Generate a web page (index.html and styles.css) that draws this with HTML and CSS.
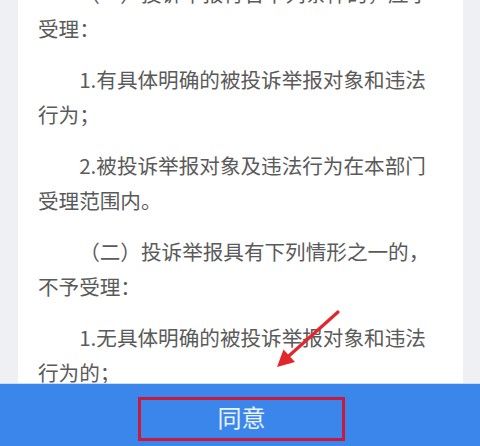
FILE: index.html
```html
<!DOCTYPE html>
<html lang="zh-CN">
<head>
<meta charset="utf-8">
<title>投诉举报须知</title>
<link rel="stylesheet" href="styles.css">
</head>
<body>
<div class="page">
  <main class="viewport">
    <article class="card">
      <p class="para indent">（一）投诉举报符合下列条件的，应予受理：</p>
      <p class="para indent">1.有具体明确的被投诉举报对象和违法行为；</p>
      <p class="para indent">2.被投诉举报对象及违法行为在本部门受理范围内。</p>
      <p class="para indent">（二）投诉举报具有下列情形之一的，不予受理：</p>
      <p class="para indent">1.无具体明确的被投诉举报对象和违法行为的；</p>
      <p class="para indent">2.被投诉举报对象及违法行为不在本部门受理范围内的；</p>
    </article>
  </main>
  <footer class="footer">
    <button class="agree">同意</button>
  </footer>
  <svg class="arrow" width="480" height="446" viewBox="0 0 480 446" aria-hidden="true">
    <line x1="338" y1="312" x2="286" y2="358.5" stroke="#e3262a" stroke-width="3.2" stroke-linecap="round"/>
    <polygon points="277,367 283.5,349.5 295,362" fill="#e3262a"/>
  </svg>
</div>
</body>
</html>
```
FILE: styles.css
```css
html, body {
  margin: 0;
  padding: 0;
}
body {
  width: 480px;
  height: 446px;
  overflow: hidden;
  background: #eef0f3;
  font-family: "Noto Sans CJK SC", "Noto Sans", sans-serif;
}
.page {
  display: flex;
  flex-direction: column;
  height: 446px;
}
.viewport {
  height: 383px;
  overflow: hidden;
  flex: none;
}
.card {
  margin: -24px 17px 0 18px;
  padding: 0 20px 40px 20px;
  background: #ffffff;
  color: #5a5a5a;
  font-size: 20.6px;
  line-height: 35px;
}
.para {
  margin: 0 0 16px 0;
}
.indent {
  text-indent: 2em;
}
.footer {
  flex: 1;
  background: #3b86ea;
  border-top: 1px solid #c9ddf8;
  display: flex;
  justify-content: center;
  align-items: flex-start;
  padding-top: 13px;
}
.agree {
  width: 207px;
  height: 44px;
  margin-left: 3px;
  box-sizing: border-box;
  border: 3px solid #c71a3c;
  background: transparent;
  color: #eaf2ff;
  font-family: "Noto Sans CJK SC", "Noto Sans", sans-serif;
  font-size: 24px;
  line-height: 34px;
  padding: 0 0 4px 0;
}
.arrow {
  position: absolute;
  left: 0;
  top: 0;
  pointer-events: none;
}
```
